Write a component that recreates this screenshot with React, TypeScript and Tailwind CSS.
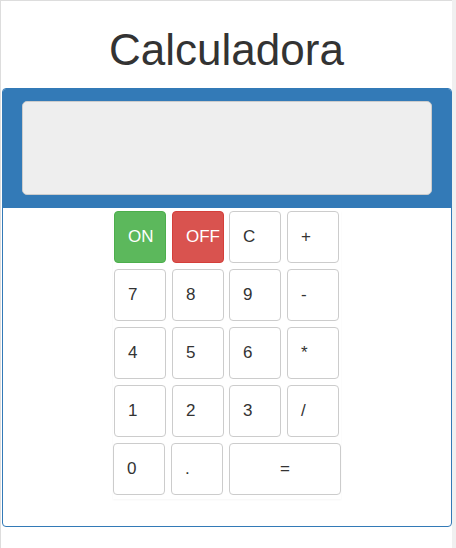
import React, { useState } from 'react';

const rows = [
  ['7', '8', '9', '-'],
  ['4', '5', '6', '*'],
  ['1', '2', '3', '/'],
];

function Key({ label, onClick, className = '' }: { label: string; onClick?: () => void; className?: string }) {
  return (
    <button
      onClick={onClick}
      className={`h-[52px] w-[52px] rounded-[4px] border border-[#ccc] bg-white pl-[13px] text-left text-[17px] text-[#333] ${className}`}
    >
      {label}
    </button>
  );
}

export default function App() {
  const [on, setOn] = useState(true);
  const [value, setValue] = useState('');

  const press = (k: string) => {
    if (!on) return;
    if (k === 'C') return setValue('');
    if (k === '=') {
      try {
        // eslint-disable-next-line no-new-func
        setValue(String(Function(`return (${value})`)()));
      } catch {
        setValue('Erro');
      }
      return;
    }
    setValue(v => v + k);
  };

  return (
    <div className="flex h-[548px] w-[456px] bg-[#f0f0f0] font-['Liberation_Sans',Arial,sans-serif]">
      <div className="flex h-full w-[452px] flex-col border-l border-t border-[#ddd] bg-white">
        {/* Title */}
        <h1 className="mt-[25px] mb-[14px] text-center text-[44px] leading-[48px] text-[#333]">Calculadora</h1>

        {/* Panel */}
        <div className="ml-px overflow-hidden rounded-[4px] border border-[#337ab7]">
          <div className="bg-[#337ab7] px-[19px] pt-[12px] pb-[13px]">
            <input
              readOnly
              value={value}
              className="h-[94px] w-full rounded-[5px] border border-[#ccc] bg-[#eee] px-3 text-right text-[28px] text-[#333] outline-none"
            />
          </div>

          <div className="flex flex-col items-center pt-[3px] pb-[27px]">
            <div className="flex flex-col gap-[6px] pb-[4px] shadow-[0_1px_2px_rgba(0,0,0,0.04)]">
              <div className="flex gap-[6px] pl-px">
                <button
                  onClick={() => setOn(true)}
                  className="h-[52px] w-[52px] rounded-[4px] border border-[#4cae4c] bg-[#5cb85c] pl-[13px] text-left text-[17px] text-white"
                >
                  ON
                </button>
                <button
                  onClick={() => { setOn(false); setValue(''); }}
                  className="h-[52px] w-[52px] rounded-[4px] border border-[#d43f3a] bg-[#d9534f] pl-[13px] text-left text-[17px] text-white"
                >
                  OFF
                </button>
                <Key label="C" onClick={() => press('C')} className="-ml-px" />
                <Key label="+" onClick={() => press('+')} />
              </div>
              {rows.map((r, i) => (
                <div key={i} className="flex gap-[6px] pl-px">
                  {r.map((k, j) => (
                    <Key key={k} label={k} onClick={() => press(k)} className={j === 2 ? '-ml-px' : ''} />
                  ))}
                </div>
              ))}
              <div className="flex gap-[6px]">
                <Key label="0" onClick={() => press('0')} />
                <Key label="." onClick={() => press('.')} />
                <button
                  onClick={() => press('=')}
                  className="h-[52px] w-[112px] rounded-[4px] border border-[#ccc] bg-white text-center text-[17px] text-[#333]"
                >
                  =
                </button>
              </div>
            </div>
          </div>
        </div>
      </div>
    </div>
  );
}
